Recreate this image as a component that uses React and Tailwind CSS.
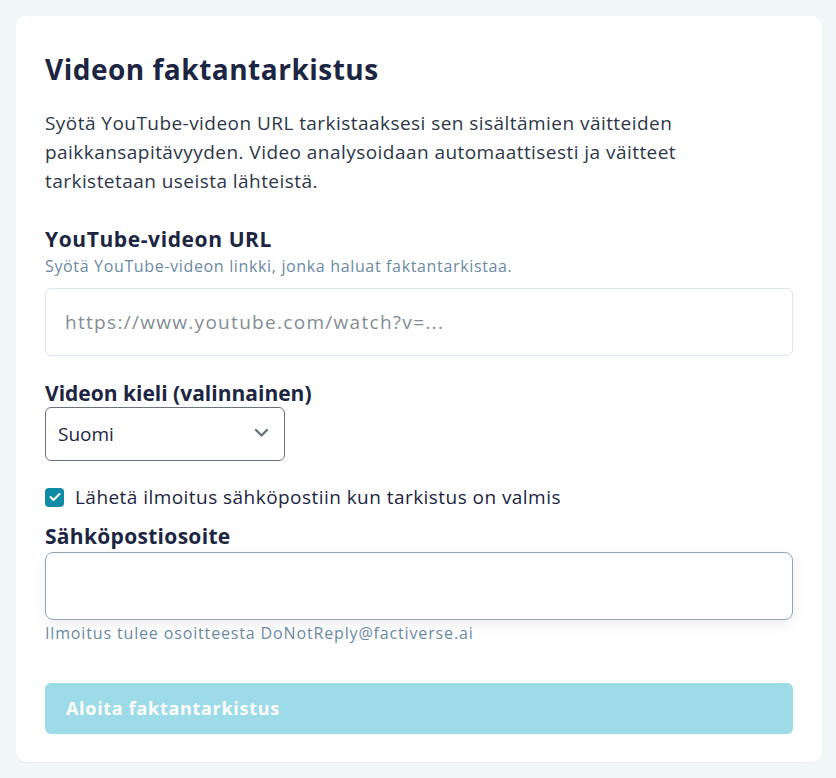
import { useState } from 'react';

export default function App() {
  const [url, setUrl] = useState('');
  const [lang, setLang] = useState('fi');
  const [notify, setNotify] = useState(true);
  const [email, setEmail] = useState('');

  return (
    <div className="min-h-screen bg-[#f1f6f9] p-4 font-['Open_Sans',sans-serif] text-[#1c2541]">
      <div className="bg-white rounded-[10px] w-[806px] h-[746px] px-[29px] pt-[35px] shadow-[0_1px_2px_rgba(0,0,0,0.04)]">
        <h1 className="text-[28px] font-bold leading-[36px] tracking-[0.5px] text-[#1c2541]">Videon faktantarkistus</h1>

        <p className="mt-[22px] text-[19px] leading-[29px] tracking-[0.45px] text-[#2d3748] pr-[40px]">
          Syötä YouTube-videon URL tarkistaaksesi sen sisältämien väitteiden paikkansapitävyyden. Video analysoidaan automaattisesti ja väitteet tarkistetaan useista lähteistä.
        </p>

        <div className="mt-[29px]">
          <label className="block text-[21px] font-bold leading-[28px] tracking-[0.6px]">YouTube-videon URL</label>
          <p className="mt-[2px] text-[16px] leading-[22px] tracking-[0.65px] text-[#6a8aa3]">Syötä YouTube-videon linkki, jonka haluat faktantarkistaa.</p>
          <input
            type="url"
            value={url}
            onChange={(e) => setUrl(e.target.value)}
            placeholder="https://www.youtube.com/watch?v=..."
            className="mt-[11px] w-full h-[68px] rounded-[6px] border border-[#dde7ef] px-[19px] text-[19px] tracking-[1.3px] placeholder-[#858c96] focus:outline-none"
          />
        </div>

        <div className="mt-[23px]">
          <label className="block text-[21px] font-bold leading-[28px] tracking-[0px]">Videon kieli (valinnainen)</label>
          <div className="relative w-[240px]">
            <select
              value={lang}
              onChange={(e) => setLang(e.target.value)}
              className="appearance-none w-full h-[54px] rounded-[6px] border border-[#6b7280] pl-[12px] text-[19px] bg-white focus:outline-none"
            >
              <option value="fi">Suomi</option>
              <option value="en">English</option>
              <option value="sv">Svenska</option>
            </select>
            <svg className="absolute right-[16px] top-[21px] pointer-events-none" width="15" height="10" viewBox="0 0 15 10">
              <path d="M2 2l5.5 5.5L13 2" fill="none" stroke="#6b7280" strokeWidth="2.4" strokeLinecap="round" strokeLinejoin="round" />
            </svg>
          </div>
        </div>

        <label className="mt-[25px] flex items-center gap-[11px] cursor-pointer">
          <span
            onClick={() => setNotify(!notify)}
            className={`w-[19px] h-[19px] rounded-[4px] flex items-center justify-center ${notify ? 'bg-[#0f8ba6]' : 'border border-[#6b7280] bg-white'}`}
          >
            {notify && (
              <svg width="12" height="10" viewBox="0 0 12 10">
                <path d="M1.5 5l3 3 6-6" fill="none" stroke="white" strokeWidth="2" strokeLinecap="round" strokeLinejoin="round" />
              </svg>
            )}
          </span>
          <span className="text-[19px] leading-[22px] tracking-[0.45px]">Lähetä ilmoitus sähköpostiin kun tarkistus on valmis</span>
        </label>

        <div className="mt-[14px]">
          <label className="block text-[21px] font-bold leading-[28px] tracking-[0.3px]">Sähköpostiosoite</label>
          <input
            type="email"
            value={email}
            onChange={(e) => setEmail(e.target.value)}
            className="mt-[2px] w-full h-[68px] rounded-[8px] border border-[#8fa5ba] px-[16px] text-[18px] shadow-[0_4px_14px_rgba(0,0,0,0.08)] focus:outline-none"
          />
          <p className="mt-[2px] text-[16px] leading-[22px] tracking-[0.85px] text-[#6a8aa3]">Ilmoitus tulee osoitteesta DoNotReply@factiverse.ai</p>
        </div>

        <button
          disabled
          className="mt-[39px] w-full h-[51px] rounded-[6px] bg-[#9cdbe7] text-left px-[21px] text-[18px] font-bold tracking-[0.7px] text-white"
        >
          Aloita faktantarkistus
        </button>
      </div>
    </div>
  );
}
